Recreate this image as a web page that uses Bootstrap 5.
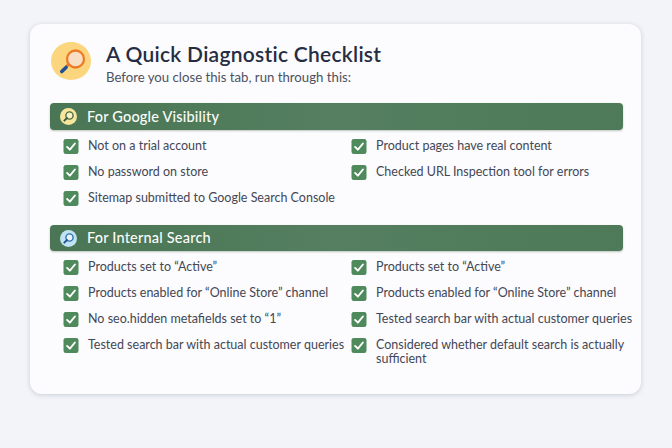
<!DOCTYPE html>
<html lang="en"><head><meta charset="utf-8"><title>Checklist</title>
<link href="https://cdn.jsdelivr.net/npm/bootstrap@5.3.0/dist/css/bootstrap.min.css" rel="stylesheet">
<style>
html,body{height:100%;}
body{width:672px;height:448px;overflow:hidden;background:#f2f4f9;font-family:"Lato","Open Sans",sans-serif;color:#3f4552;padding:24px 31px 54px 30px;}
.sheet{height:370px;background:#fcfbfd;border-radius:12px;box-shadow:0 1px 5px rgba(60,70,90,.22);padding:18px 18px 0 20px;}
.headwrap{margin-bottom:23px;height:38px;padding-left:1px;}
.bigicon{width:40px;height:38px;flex:none;margin-right:15px;}
.ttl{font-size:21px;line-height:24px;font-weight:600;color:#262d42;letter-spacing:.27px;margin:0 0 2px;}
.sub{font-size:13.2px;line-height:18px;color:#4d5261;margin:0;}
.bar{height:27px;background:linear-gradient(90deg,#4a7655,#557f60 50%,#4e7a59);border-radius:4px;color:#fbfdfb;font-size:14.5px;font-weight:500;letter-spacing:.2px;padding-left:10px;box-shadow:0 1px 2px rgba(40,70,50,.3);width:573px;}
.barico{width:17px;height:17px;flex:none;margin-right:10px;}
.items{display:grid;grid-template-columns:288px 1fr;padding-left:13px;padding-top:3px;}
.two-sec{margin-top:14px;height:26px;}
.it{display:flex;align-items:flex-start;min-height:26px;font-size:12.5px;line-height:14px;color:#434855;padding-top:6px;white-space:nowrap;}
.it.wr{white-space:normal;width:285px;}
.chk{width:16px;height:15px;flex:none;margin-right:9px;}
</style></head><body>
<svg width="0" height="0" class="position-absolute"><defs>
<symbol id="tick" viewBox="0 0 16 16"><rect width="16" height="16" rx="2.5" fill="#4f8a5c"/><path d="M3.8 8.4 6.8 11.4 12.2 4.8" fill="none" stroke="#fff" stroke-width="2" stroke-linecap="round" stroke-linejoin="round"/></symbol>
</defs></svg>
<div class="sheet">
<div class="headwrap d-flex align-items-start">
<svg class="bigicon" viewBox="0 0 40 38"><ellipse cx="20" cy="19" rx="20" ry="19" fill="#fbd67e"/><path d="M17 23 15.500 24.500" stroke="#ee7a27" stroke-width="3" stroke-linecap="round"/><path d="M15 25.500 10.800 29.500" stroke="#1f4f96" stroke-width="3.600" stroke-linecap="round"/><circle cx="24.500" cy="17" r="8.500" fill="#f8dfc4" stroke="#ee7a27" stroke-width="2.300"/></svg>
<div class="headtext"><h1 class="ttl">A Quick Diagnostic Checklist</h1><p class="sub">Before you close this tab, run through this:</p></div>
</div>
<div class="bar d-flex align-items-center"><svg class="barico" viewBox="0 0 17 17"><circle cx="8.500" cy="8.500" r="8.500" fill="#f6e79c"/><circle cx="9.500" cy="7.500" r="3.600" fill="#f9f2c8" stroke="#4a6b3e" stroke-width="1.400"/><path d="M7 10 4.300 12.700" stroke="#3f5a36" stroke-width="1.800" stroke-linecap="round"/></svg>For Google Visibility</div>
<div class="items">
<div class="it"><svg class="chk"><use href="#tick"/></svg>Not on a trial account</div>
<div class="it"><svg class="chk"><use href="#tick"/></svg>Product pages have real content</div>
<div class="it"><svg class="chk"><use href="#tick"/></svg>No password on store</div>
<div class="it"><svg class="chk"><use href="#tick"/></svg>Checked URL Inspection tool for errors</div>
<div class="it"><svg class="chk"><use href="#tick"/></svg>Sitemap submitted to Google Search Console</div>
</div>
<div class="bar two-sec d-flex align-items-center"><svg class="barico" viewBox="0 0 17 17"><circle cx="8.500" cy="8.500" r="8.500" fill="#bfe3f2"/><circle cx="9.500" cy="7.500" r="3.600" fill="#e6f5fb" stroke="#2f6fa8" stroke-width="1.400"/><path d="M7 10 4.300 12.700" stroke="#1f4f96" stroke-width="1.800" stroke-linecap="round"/></svg>For Internal Search</div>
<div class="items">
<div class="it"><svg class="chk"><use href="#tick"/></svg>Products set to “Active”</div>
<div class="it"><svg class="chk"><use href="#tick"/></svg>Products set to “Active”</div>
<div class="it"><svg class="chk"><use href="#tick"/></svg>Products enabled for “Online Store” channel</div>
<div class="it"><svg class="chk"><use href="#tick"/></svg>Products enabled for “Online Store” channel</div>
<div class="it"><svg class="chk"><use href="#tick"/></svg>No seo.hidden metafields set to “1”</div>
<div class="it"><svg class="chk"><use href="#tick"/></svg>Tested search bar with actual customer queries</div>
<div class="it"><svg class="chk"><use href="#tick"/></svg>Tested search bar with actual customer queries</div>
<div class="it wr"><svg class="chk"><use href="#tick"/></svg><span>Considered whether default search is actually sufficient</span></div>
</div>
</div>
<script src="https://cdn.jsdelivr.net/npm/bootstrap@5.3.0/dist/js/bootstrap.bundle.min.js"></script>
</body></html>
